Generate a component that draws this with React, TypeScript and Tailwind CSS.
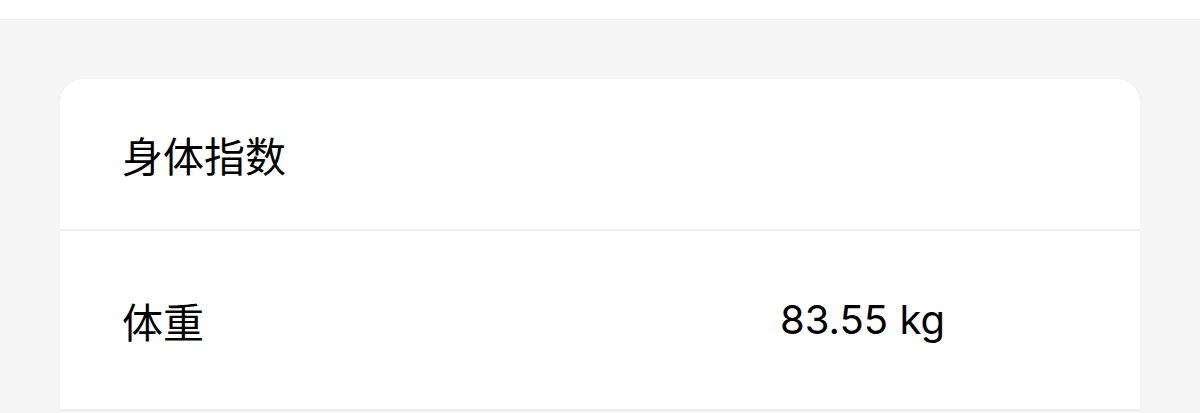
export default function App() {
  return (
    <div className="h-[413px] w-[1200px] overflow-hidden bg-[#f5f5f5] font-['Inter','Noto_Sans_CJK_SC',sans-serif] text-black">
      <div className="h-[20px] border-b border-[#efefef] bg-white" />
      <div className="px-[60px] pt-[59px]">
        <div className="overflow-hidden rounded-t-[24px] bg-white">
          <div className="flex h-[152px] items-center border-b-2 border-[#eeeeee] pl-[62px]">
            <span className="text-[41px] leading-none font-['Noto_Sans_CJK_SC',sans-serif]">身体指数</span>
          </div>
          <div className="flex h-[180px] items-center justify-between border-b-2 border-[#eeeeee] pl-[62px] pr-[195px]">
            <span className="text-[41px] leading-none font-['Noto_Sans_CJK_SC',sans-serif]">体重</span>
            <span className="text-[40px] leading-none">83.55 kg</span>
          </div>
        </div>
      </div>
    </div>
  )
}
